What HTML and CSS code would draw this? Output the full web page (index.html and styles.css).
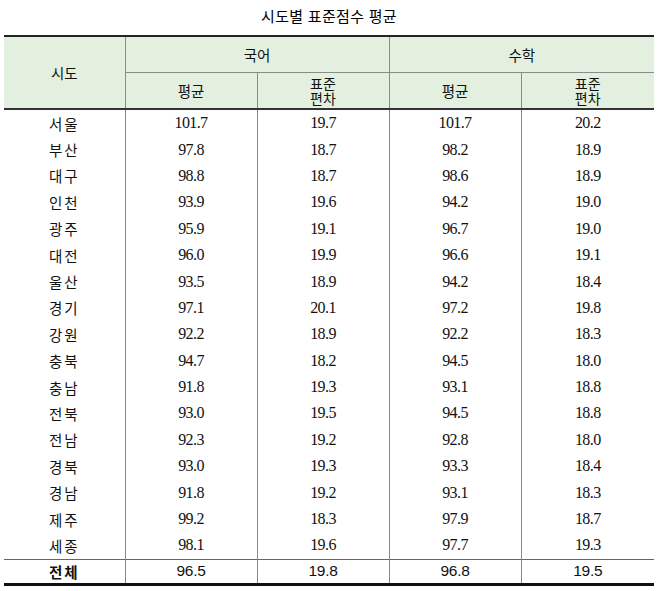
FILE: index.html
```html
<!DOCTYPE html>
<html lang="ko">
<head>
<meta charset="utf-8">
<link rel="stylesheet" href="styles.css">
</head>
<body>
<div class="page">
  <h1 class="title">시도별 표준점수 평균</h1>
  <table class="tbl">
    <colgroup>
      <col class="c0"><col class="c1"><col class="c1"><col class="c1"><col class="c4">
    </colgroup>
    <thead>
      <tr class="h1">
        <th rowspan="2" class="region">시도</th>
        <th colspan="2">국어</th>
        <th colspan="2" class="last">수학</th>
      </tr>
      <tr class="h2">
        <th>평균</th>
        <th><span class="stack"><span>표준</span><span>편차</span></span></th>
        <th>평균</th>
        <th class="last"><span class="stack"><span>표준</span><span>편차</span></span></th>
      </tr>
    </thead>
    <tbody>
      <tr><td class="name">서울</td><td>101.7</td><td>19.7</td><td>101.7</td><td>20.2</td></tr>
      <tr><td class="name">부산</td><td>97.8</td><td>18.7</td><td>98.2</td><td>18.9</td></tr>
      <tr><td class="name">대구</td><td>98.8</td><td>18.7</td><td>98.6</td><td>18.9</td></tr>
      <tr><td class="name">인천</td><td>93.9</td><td>19.6</td><td>94.2</td><td>19.0</td></tr>
      <tr><td class="name">광주</td><td>95.9</td><td>19.1</td><td>96.7</td><td>19.0</td></tr>
      <tr><td class="name">대전</td><td>96.0</td><td>19.9</td><td>96.6</td><td>19.1</td></tr>
      <tr><td class="name">울산</td><td>93.5</td><td>18.9</td><td>94.2</td><td>18.4</td></tr>
      <tr><td class="name">경기</td><td>97.1</td><td>20.1</td><td>97.2</td><td>19.8</td></tr>
      <tr><td class="name">강원</td><td>92.2</td><td>18.9</td><td>92.2</td><td>18.3</td></tr>
      <tr><td class="name">충북</td><td>94.7</td><td>18.2</td><td>94.5</td><td>18.0</td></tr>
      <tr><td class="name">충남</td><td>91.8</td><td>19.3</td><td>93.1</td><td>18.8</td></tr>
      <tr><td class="name">전북</td><td>93.0</td><td>19.5</td><td>94.5</td><td>18.8</td></tr>
      <tr><td class="name">전남</td><td>92.3</td><td>19.2</td><td>92.8</td><td>18.0</td></tr>
      <tr><td class="name">경북</td><td>93.0</td><td>19.3</td><td>93.3</td><td>18.4</td></tr>
      <tr><td class="name">경남</td><td>91.8</td><td>19.2</td><td>93.1</td><td>18.3</td></tr>
      <tr><td class="name">제주</td><td>99.2</td><td>18.3</td><td>97.9</td><td>18.7</td></tr>
      <tr><td class="name">세종</td><td>98.1</td><td>19.6</td><td>97.7</td><td>19.3</td></tr>
    </tbody>
    <tfoot>
      <tr><td class="name">전체</td><td>96.5</td><td>19.8</td><td>96.8</td><td>19.5</td></tr>
    </tfoot>
  </table>
</div>
</body>
</html>
```

FILE: styles.css
```css
html, body {
  margin: 0;
  padding: 0;
  background: #ffffff;
}

.page {
  width: 658px;
  padding: 4px 4px 0 4px;
  box-sizing: border-box;
  font-family: "Noto Sans CJK KR", "Noto Sans", sans-serif;
  color: #111;
}

.title {
  margin: 0;
  height: 31px;
  font-size: 15px;
  font-weight: 400;
  line-height: 24px;
  text-align: center;
  letter-spacing: 0.3px;
  color: #000;
}

.tbl {
  width: 650px;
  border-collapse: collapse;
  table-layout: fixed;
}

.c0 { width: 121px; }
.c1 { width: 132px; }
.c4 { width: 133px; }

.tbl th {
  background: #e3f0df;
  font-weight: 400;
  font-size: 14.5px;
  line-height: 16px;
  padding: 0;
  text-align: center;
  border-left: 1px solid #8a8a8a;
  border-bottom: 1px solid #8a8a8a;
}

.stack {
  display: flex;
  flex-direction: column;
  align-items: center;
  gap: 0;
}

.stack span {
  display: block;
  font-size: 14px;
  line-height: 15px;
  height: 15px;
  overflow: visible;
}

.tbl th.region { border-left: none; }

.tbl thead tr.h1 th { border-top: 2px solid #222; height: 35px; }
.tbl thead tr.h2 th { border-bottom: 2px solid #333; height: 35px; }
.tbl thead tr.h1 th.region { border-bottom: 2px solid #333; }

.tbl td {
  padding: 0;
  text-align: center;
  height: 26.4px;
  font-family: "Liberation Serif", "DejaVu Serif", serif;
  font-size: 16px;
  letter-spacing: -0.6px;
  border-left: 1px solid #8a8a8a;
}

.tbl td.name {
  border-left: none;
  font-family: "Noto Sans CJK KR", "Noto Sans", sans-serif;
  font-size: 14.5px;
  letter-spacing: 2px;
}

.tbl tfoot td {
  border-top: 1px solid #666;
  border-bottom: 3px solid #111;
  height: 23px;
  font-family: "Liberation Sans", "Noto Sans", sans-serif;
  font-size: 15.5px;
  letter-spacing: -0.3px;
}

.tbl tfoot td.name {
  font-family: "Noto Sans CJK KR", sans-serif;
  font-weight: 700;
  font-size: 14.5px;
  letter-spacing: 2px;
}
```
